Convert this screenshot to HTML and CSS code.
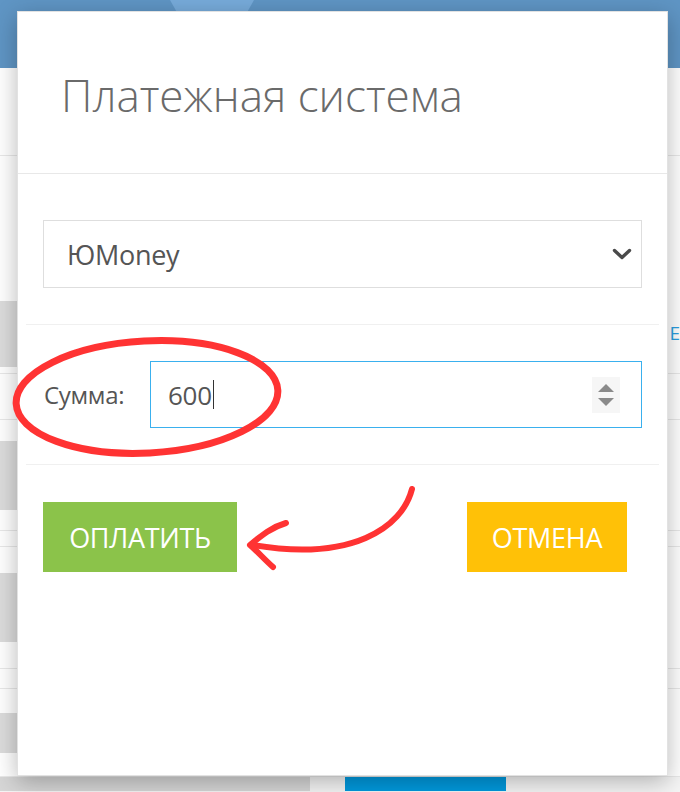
FILE: index.html
```html
<!DOCTYPE html>
<html lang="ru">
<head>
<meta charset="utf-8">
<title>Платежная система</title>
<link rel="stylesheet" href="styles.css">
</head>
<body>
<div class="page">
  <header class="topbar"><span class="tab"></span></header>
  <div class="rows">
    <div class="row r1"></div>
    <div class="row r2"></div>
    <div class="row r3"><span class="cell-grey g3"></span><span class="edge-text">Е</span></div>
    <div class="row r4"></div>
    <div class="row r5"><span class="cell-grey g5"></span></div>
    <div class="row r6"></div>
    <div class="row r7"><span class="cell-grey g7"></span></div>
    <div class="row r8"></div>
    <div class="row r9"><span class="cell-grey g9"></span></div>
    <div class="row r10"><span class="cell-grey g10"></span><span class="blue-btn"></span></div>
  </div>
</div>

<div class="modal">
  <div class="modal-header">
    <h2 class="modal-title">Платежная система</h2>
  </div>
  <div class="modal-body">
    <div class="select">
      <span class="select-value">ЮMoney</span>
      <svg class="chevron" width="20" height="14" viewBox="0 0 20 14"><path d="M2.5 3.5 L10 10.5 L17.5 3.5" fill="none" stroke="#4a4a4a" stroke-width="3.4" stroke-linecap="round" stroke-linejoin="round"/></svg>
    </div>
    <div class="amount-row">
      <label class="amount-label">Сумма:</label>
      <div class="input">
        <span class="input-value">600</span><span class="caret"></span>
        <div class="spin">
          <svg width="28" height="36" viewBox="0 0 28 36"><path d="M6 15 L14 7 L22 15 Z" fill="#8a8a8a"/><path d="M6 21 L22 21 L14 29 Z" fill="#8a8a8a"/></svg>
        </div>
      </div>
    </div>
    <div class="actions">
      <button class="btn btn-pay">ОПЛАТИТЬ</button>
      <button class="btn btn-cancel">ОТМЕНА</button>
    </div>
  </div>
</div>

<svg class="annot" width="680" height="792" viewBox="0 0 680 792">
  <ellipse cx="147" cy="397" rx="131" ry="56" transform="rotate(-3 147 397)" fill="none" stroke="#ff3333" stroke-width="7"/>
  <path d="M412 489 C 402 528 352 562 252 545" fill="none" stroke="#ff3333" stroke-width="6" stroke-linecap="round"/>
  <path d="M286 523 C 272 527 262 535 250 545 C 258 552 265 560 273 567" fill="none" stroke="#ff3333" stroke-width="6" stroke-linecap="round" stroke-linejoin="round"/>
</svg>
</body>
</html>
```
FILE: styles.css
```css
* { box-sizing: border-box; }
html, body { margin: 0; padding: 0; }
body {
  width: 680px;
  height: 792px;
  overflow: hidden;
  position: relative;
  background: #f7f7f7;
  font-family: "Open Sans", "Liberation Sans", sans-serif;
}

/* background page */
.page { width: 680px; height: 792px; display: flex; flex-direction: column; }
.topbar {
  height: 68px;
  background: #5f95c4;
  display: flex;
  align-items: flex-start;
  flex-shrink: 0;
}
.tab {
  margin-left: 170px;
  width: 84px;
  height: 12px;
  background: #77abda;
  clip-path: polygon(0 0, 100% 0, 92% 100%, 8% 100%);
}
.rows { display: flex; flex-direction: column; background: #fff; flex: 1; }
.row { display: flex; align-items: center; border-bottom: 1px solid #e8e8e8; position: relative; flex-shrink: 0; }
.r1 { height: 88px; }
.r2 { height: 145px; border-bottom: none; }
.r3 { height: 73px; align-items: flex-start; }
.r4 { height: 46px; }
.r5 { height: 111px; }
.r6 { height: 16px; }
.r7 { height: 122px; }
.r8 { height: 20px; }
.r9 { height: 88px; }
.r10 { flex: 1; border-bottom: none; background: #f5f5f5; align-items: stretch; }
.cell-grey { width: 310px; background: #dcdcdc; }
.g3 { height: 66px; }
.g5 { height: 69px; }
.g7 { height: 69px; }
.g9 { height: 40px; }
.g10 { height: 14px; background: #d6d6d6; }
.blue-btn { margin-left: 35px; width: 161px; height: 14px; background: #0099dd; }
.edge-text {
  margin-left: auto;
  margin-right: 0;
  margin-top: 20px;
  color: #2b9ee0;
  font-size: 19px;
  line-height: 24px;
}

/* modal */
.modal {
  position: absolute;
  left: 17px;
  top: 11px;
  width: 651px;
  height: 765px;
  background: #fff;
  border: 1px solid #e2e2e2;
  box-shadow: 0 6px 22px rgba(0,0,0,0.28);
  display: flex;
  flex-direction: column;
}
.modal-header {
  height: 162px;
  border-bottom: 1px solid #e8e8e8;
  padding: 56px 0 0 43px;
  flex-shrink: 0;
}
.modal-title {
  margin: 0;
  font-weight: 300;
  font-size: 44px;
  line-height: 54px;
  color: #6a6a6a;
}
.modal-body { padding: 46px 25px 0 25px; display: flex; flex-direction: column; }
.select {
  height: 68px;
  border: 1px solid #dedede;
  display: flex;
  align-items: center;
  padding: 0 9px 0 23px;
}
.select-value { font-size: 27px; color: #555; flex: 1; letter-spacing: -0.3px; }
.chevron { display: block; }

.amount-row {
  margin: 36px -17px 0 -17px;
  padding: 36px 17px;
  border-top: 1px solid #f0f0f0;
  border-bottom: 1px solid #f0f0f0;
  display: flex;
  align-items: center;
}
.amount-label { width: 107px; padding-left: 1px; font-size: 24px; color: #555; letter-spacing: -0.3px; }
.input {
  flex: 1;
  height: 67px;
  border: 1px solid #3ab0ee;
  display: flex;
  align-items: center;
  padding: 0 21px 0 17px;
}
.input-value { font-size: 26px; color: #555; letter-spacing: -0.3px; }
.caret { width: 1px; height: 29px; background: #333; margin-left: 1px; }
.spin { margin-left: auto; background: #f6f6f6; display: flex; }
.spin svg { display: block; }

.actions {
  margin-top: 37px;
  display: flex;
  justify-content: space-between;
  padding-right: 15px;
}
.btn {
  height: 70px;
  border: none;
  font-family: "Open Sans", "Liberation Sans", sans-serif;
  font-size: 27px;
  letter-spacing: -0.3px;
  color: #fff;
  padding: 0;
}
.btn-pay { width: 194px; background: #8bc34a; }
.btn-cancel { width: 160px; background: #ffc107; }

.annot { position: absolute; left: 0; top: 0; pointer-events: none; }
```
